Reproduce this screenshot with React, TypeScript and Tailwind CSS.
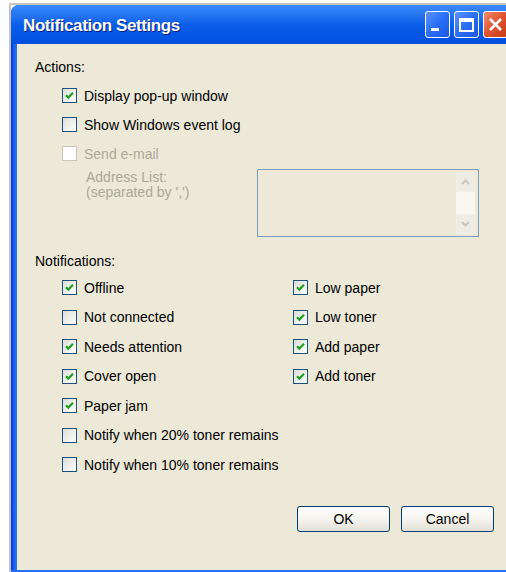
import React from 'react';

type Item = { label: string; checked?: boolean; disabled?: boolean };

const actions: Item[] = [
  { label: 'Display pop-up window', checked: true },
  { label: 'Show Windows event log' },
  { label: 'Send e-mail', disabled: true },
];

const leftNotifications: Item[] = [
  { label: 'Offline', checked: true },
  { label: 'Not connected' },
  { label: 'Needs attention', checked: true },
  { label: 'Cover open', checked: true },
  { label: 'Paper jam', checked: true },
  { label: 'Notify when 20% toner remains' },
  { label: 'Notify when 10% toner remains' },
];

const rightNotifications: Item[] = [
  { label: 'Low paper', checked: true },
  { label: 'Low toner', checked: true },
  { label: 'Add paper', checked: true },
  { label: 'Add toner', checked: true },
];

function CheckBox({ checked, disabled }: { checked?: boolean; disabled?: boolean }) {
  if (disabled) {
    return <span className="w-[15px] h-[15px] shrink-0 border border-[#cac8bb] bg-white" />;
  }
  return (
    <span className="w-[15px] h-[15px] shrink-0 border border-[#1c5180] bg-gradient-to-br from-[#dcdcd7] to-white flex items-center justify-center">
      {checked && (
        <svg width="11" height="11" viewBox="0 0 11 11">
          <path d="M2 5.2 L4.3 7.6 L9 2.8" fill="none" stroke="#21a121" strokeWidth="2.2" />
        </svg>
      )}
    </span>
  );
}

function CheckRow({ item, className = 'h-[29px]' }: { item: Item; className?: string }) {
  return (
    <div className={`flex items-center gap-[7px] ${className}`}>
      <CheckBox checked={item.checked} disabled={item.disabled} />
      <span className={item.disabled ? 'text-[#aca899]' : 'text-black'}>{item.label}</span>
    </div>
  );
}

function Chevron({ up }: { up?: boolean }) {
  return (
    <svg width="9" height="6" viewBox="0 0 9 6">
      <path d={up ? 'M1 5 L4.5 1.5 L8 5' : 'M1 1 L4.5 4.5 L8 1'} fill="none" stroke="#c9c7ba" strokeWidth="2" />
    </svg>
  );
}

function CaptionButton({ kind }: { kind: 'min' | 'max' | 'close' }) {
  const bg =
    kind === 'close'
      ? 'bg-gradient-to-br from-[#f08a6a] via-[#e0532e] to-[#c43a18]'
      : 'bg-gradient-to-br from-[#5a93ff] via-[#2a6ef5] to-[#1c56e0]';
  return (
    <div className={`w-[25px] h-[27px] rounded-[3px] border border-white flex items-center justify-center ${bg}`}>
      {kind === 'min' && <span className="w-[8px] h-[3px] bg-white mt-[10px] mr-[6px]" />}
      {kind === 'max' && <span className="w-[15px] h-[14px] border-2 border-white border-t-[4px]" />}
      {kind === 'close' && (
        <svg width="15" height="15" viewBox="0 0 15 15">
          <path d="M2 2 L13 13 M13 2 L2 13" stroke="white" strokeWidth="2.6" />
        </svg>
      )}
    </div>
  );
}

function XPButton({ children }: { children: React.ReactNode }) {
  return (
    <button className="w-[93px] h-[26px] rounded-[3px] border border-[#003c74] bg-gradient-to-b from-white via-[#f5f4ef] to-[#e3e1d6] text-black">
      {children}
    </button>
  );
}

export default function App() {
  return (
    <div className="w-[506px] h-[572px] overflow-hidden bg-white pl-[9px] pt-[3px] font-['Liberation_Sans',Arial,sans-serif] text-[14px] leading-[18px]">
      <div className="border-l-[2px] border-t-[2px] border-[#c4c4c4] w-[509px]">
        <div className="rounded-tl-[8px] overflow-hidden bg-[#0a5fe6]">
          {/* title bar */}
          <div className="h-[39px] flex items-center justify-between pl-[12px] bg-gradient-to-b from-[#3d8cff] via-[#0a5ee8] to-[#0050e0]">
            <span className="text-white font-bold text-[17px] tracking-[-0.4px] [text-shadow:1px_1px_0_#0a1f80] mt-[2px]">
              Notification Settings
            </span>
            <div className="flex gap-[4px] pr-[10px]">
              <CaptionButton kind="min" />
              <CaptionButton kind="max" />
              <CaptionButton kind="close" />
            </div>
          </div>

          <div className="flex">
            <div className="w-[6px] bg-gradient-to-r from-[#0831d9] via-[#1a62ee] to-[#2a74f5]" />
            <div className="flex-1 h-[526px] bg-[#ece9d8] pl-[18px] pt-[14px] flex flex-col">
              <div>Actions:</div>
              <div className="pl-[27px] mt-[5px]">
                {actions.map((a) => (
                  <CheckRow key={a.label} item={a} />
                ))}
              </div>

              <div className="flex pl-[51px] mt-[1px]">
                <div className="w-[171px] leading-[15px] text-[#aca899] pt-[1px]">
                  Address List:
                  <br />
                  (separated by ',')
                </div>
                <div className="w-[222px] h-[68px] border border-[#7f9db9] flex justify-end p-[2px] pr-[3px]">
                  <div className="w-[19px] flex flex-col">
                    <div className="h-[20px] rounded-[2px] border border-[#f0efe8] bg-[#eeede5] flex items-center justify-center">
                      <Chevron up />
                    </div>
                    <div className="flex-1 bg-[#f8f8f3]" />
                    <div className="h-[20px] rounded-[2px] border border-[#f0efe8] bg-[#eeede5] flex items-center justify-center">
                      <Chevron />
                    </div>
                  </div>
                </div>
              </div>

              <div className="mt-[15px]">Notifications:</div>
              <div className="pl-[27px] mt-[3px] flex">
                <div className="w-[231px]">
                  {leftNotifications.map((n) => (
                    <CheckRow key={n.label} item={n} className="h-[29.5px]" />
                  ))}
                </div>
                <div>
                  {rightNotifications.map((n) => (
                    <CheckRow key={n.label} item={n} className="h-[29.5px]" />
                  ))}
                </div>
              </div>

              <div className="flex gap-[11px] mt-[26px] ml-[262px]">
                <XPButton>OK</XPButton>
                <XPButton>Cancel</XPButton>
              </div>
            </div>
          </div>
          <div className="h-[4px] bg-[#2a6ef0]" />
        </div>
      </div>
    </div>
  );
}
